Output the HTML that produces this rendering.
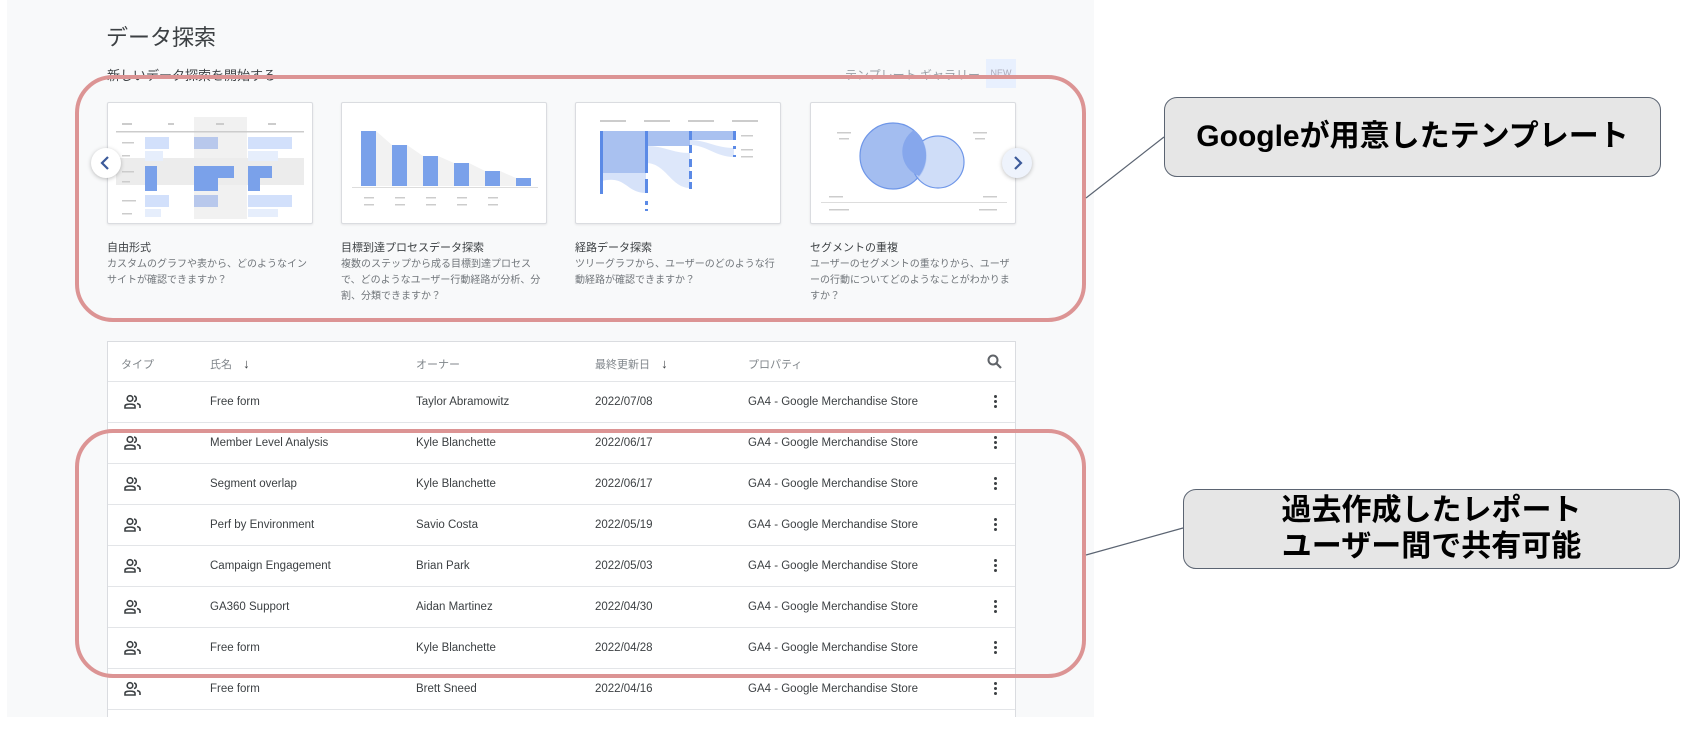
<!DOCTYPE html>
<html><head><meta charset="utf-8">
<style>
*{margin:0;padding:0;box-sizing:border-box}
body{width:1682px;height:734px;background:#fff;position:relative;overflow:hidden;font-family:"Liberation Sans","Noto Sans CJK JP",sans-serif;color:#3c4043}
.a{position:absolute}
#panel{left:7px;top:0;width:1087px;height:717px;background:#f8f9fa}
.card{position:absolute;top:102px;width:206px;height:122px;background:#fff;border:1px solid #dadce0;border-radius:2px;box-shadow:0 1px 2px rgba(0,0,0,.08)}
.ct{position:absolute;top:239px;font-size:11px;color:#3c4043;width:206px}
.cd{position:absolute;top:257px;font-size:10px;color:#70757a;line-height:16px;width:206px}
.tbl{left:107px;top:341px;width:909px;height:376px;background:#fff;border:1px solid #dadce0;border-bottom:none}
.row{position:absolute;left:0;width:907px;height:41px;border-bottom:1px solid #e3e5e8;font-size:11.5px;color:#3c4043}
.row span{position:absolute;top:14px;white-space:nowrap}
.hdr span{color:#80868b;font-size:11px}
.dots{position:absolute;left:886px;top:13px;width:3px}
.dots i{display:block;width:3px;height:3px;background:#3c4043;border-radius:50%;margin-bottom:2px}
.red{position:absolute;border:4px solid #dc9494;border-radius:38px}
.call{position:absolute;background:#e6e6e6;border:1.5px solid #5b6472;border-radius:13px;font-weight:bold;color:#000;text-align:center;font-size:30px;line-height:36px;display:flex;align-items:center;justify-content:center}
.arr{position:absolute;width:30px;height:30px;border-radius:50%;background:#fff;box-shadow:0 1px 4px rgba(0,0,0,.25)}
</style></head><body>
<div id="panel" class="a"></div>
<div class="a" style="left:106px;top:20px;font-size:22px;color:#3c4043">データ探索</div>
<div class="a" style="left:107px;top:65px;font-size:13px;color:#3c4043">新しいデータ探索を開始する</div>
<div class="a" style="left:845px;top:66px;font-size:12px;color:#9aa0a6">テンプレート ギャラリー</div>
<div class="a" style="left:986px;top:59px;width:30px;height:29px;background:#e8f0fe;font-size:9px;color:#aab;text-align:center;line-height:29px">NEW</div>

<div class="card" style="left:107px"><svg width="206" height="122">
<rect x="86" y="14" width="53" height="102" fill="#f1f1f1"/><rect x="8" y="55" width="188" height="27" fill="#ececec"/>
<g fill="#ccc"><rect x="14" y="20" width="10" height="2"/><rect x="60" y="20" width="6" height="2"/><rect x="108" y="20" width="8" height="2"/><rect x="160" y="20" width="8" height="2"/></g>
<rect x="8" y="28" width="188" height="1.5" fill="#ccc"/>
<g fill="#d2e0fb"><rect x="37" y="34" width="24" height="12"/><rect x="140" y="34" width="44" height="12"/><rect x="37" y="92" width="24" height="12"/><rect x="140" y="92" width="44" height="12"/></g>
<g fill="#e6eefc"><rect x="37" y="48" width="18" height="10"/><rect x="140" y="48" width="30" height="10"/><rect x="37" y="106" width="16" height="8"/><rect x="140" y="106" width="30" height="8"/></g>
<g fill="#b8c8ec"><rect x="86" y="34" width="24" height="12"/><rect x="86" y="92" width="24" height="12"/></g>
<g fill="#7aa1ea"><rect x="37" y="63" width="12" height="25"/><rect x="86" y="63" width="40" height="12"/><rect x="86" y="63" width="24" height="25"/><rect x="140" y="63" width="24" height="12"/><rect x="140" y="63" width="12" height="25"/></g>
<g fill="#ccc"><rect x="14" y="39" width="12" height="1.5"/><rect x="14" y="52" width="8" height="1.5"/><rect x="14" y="68" width="12" height="1.5"/><rect x="14" y="78" width="8" height="1.5"/><rect x="14" y="97" width="14" height="1.5"/><rect x="14" y="110" width="10" height="1.5"/></g>
</svg></div>
<div class="card" style="left:341px"><svg width="206" height="122">
<polygon points="34,28 50,42 65,42 81,53 96,53 112,60 127,60 143,68 158,68 174,75 189,75 189,83 19,83" fill="#f2f2f2"/>
<g fill="#7aa1ea"><rect x="19" y="28" width="15" height="55"/><rect x="50" y="42" width="15" height="41"/><rect x="81" y="53" width="15" height="30"/><rect x="112" y="60" width="15" height="23"/><rect x="143" y="68" width="15" height="15"/><rect x="174" y="75" width="15" height="8"/></g>
<rect x="10" y="84" width="186" height="1" fill="#ddd"/>
<g fill="#ccc"><rect x="22" y="94" width="10" height="1.5"/><rect x="53" y="94" width="10" height="1.5"/><rect x="84" y="94" width="10" height="1.5"/><rect x="115" y="94" width="10" height="1.5"/><rect x="146" y="94" width="10" height="1.5"/><rect x="22" y="101" width="10" height="1.5"/><rect x="53" y="101" width="10" height="1.5"/><rect x="84" y="101" width="10" height="1.5"/><rect x="115" y="101" width="10" height="1.5"/><rect x="146" y="101" width="10" height="1.5"/></g>
</svg></div>
<div class="card" style="left:575px"><svg width="206" height="122">
<g fill="#ccc"><rect x="24" y="17" width="26" height="2"/><rect x="68" y="17" width="26" height="2"/><rect x="112" y="17" width="26" height="2"/><rect x="156" y="17" width="26" height="2"/></g>
<rect x="26" y="28" width="44" height="42" fill="#a9c1f0"/>
<path d="M26 70 L70 70 L70 90 C50 90 50 72 26 78Z" fill="#d6e2f9"/>
<rect x="70" y="28" width="44" height="15" fill="#a9c1f0"/>
<path d="M70 43 C90 43 95 50 114 50 L114 85 C95 85 90 60 70 60Z" fill="#dde7fa"/>
<rect x="114" y="28" width="44" height="9" fill="#a9c1f0"/>
<path d="M114 37 C130 37 140 45 158 45 L158 54 C140 54 130 42 114 42Z" fill="#dde7fa"/>
<g fill="#5b8ae6"><rect x="24" y="28" width="3" height="63"/><rect x="69" y="28" width="3" height="42"/><rect x="69" y="76" width="3" height="14"/><rect x="69" y="98" width="3" height="4"/><rect x="69" y="106" width="3" height="2"/><rect x="113" y="28" width="3" height="9"/><rect x="113" y="42" width="3" height="8"/><rect x="113" y="56" width="3" height="8"/><rect x="113" y="68" width="3" height="8"/><rect x="113" y="79" width="3" height="7"/><rect x="157" y="28" width="3" height="9"/><rect x="157" y="43" width="3" height="3"/><rect x="157" y="52" width="3" height="2"/></g>
<g fill="#ccc"><rect x="165" y="32" width="12" height="1.5"/><rect x="165" y="46" width="12" height="1.5"/><rect x="165" y="53" width="12" height="1.5"/></g>
</svg></div>
<div class="card" style="left:810px"><svg width="206" height="122">
<circle cx="82" cy="53" r="33" fill="#a3bdf0" stroke="#6e96e8" stroke-width="1.2"/>
<circle cx="127" cy="59" r="26" fill="#c3d4f6" fill-opacity=".8" stroke="#6e96e8" stroke-width="1.2"/>
<path d="M103 27 A33 33 0 0 1 108 73 A26 26 0 0 1 103 27Z" fill="#86a7ec"/>
<g fill="#ccc"><rect x="26" y="29" width="14" height="1.5"/><rect x="28" y="35" width="10" height="1.5"/><rect x="162" y="29" width="14" height="1.5"/><rect x="164" y="35" width="10" height="1.5"/><rect x="18" y="93" width="14" height="1.5"/><rect x="172" y="93" width="14" height="1.5"/><rect x="18" y="106" width="20" height="1.5"/><rect x="168" y="106" width="18" height="1.5"/></g>
<rect x="10" y="99" width="186" height="1" fill="#ddd"/>
</svg></div>

<div class="arr" style="left:91px;top:148px"><svg width="30" height="30"><path d="M17 9 L11 15 L17 21" fill="none" stroke="#3c5a9a" stroke-width="2.2"/></svg></div>
<div class="arr" style="left:1002px;top:148px;background:#eef3fc"><svg width="30" height="30"><path d="M13 9 L19 15 L13 21" fill="none" stroke="#3c5a9a" stroke-width="2.2"/></svg></div>

<div class="ct" style="left:107px">自由形式</div>
<div class="cd" style="left:107px">カスタムのグラフや表から、どのようなイン<br>サイトが確認できますか？</div>
<div class="ct" style="left:341px">目標到達プロセスデータ探索</div>
<div class="cd" style="left:341px">複数のステップから成る目標到達プロセス<br>で、どのようなユーザー行動経路が分析、分<br>割、分類できますか？</div>
<div class="ct" style="left:575px">経路データ探索</div>
<div class="cd" style="left:575px">ツリーグラフから、ユーザーのどのような行<br>動経路が確認できますか？</div>
<div class="ct" style="left:810px">セグメントの重複</div>
<div class="cd" style="left:810px">ユーザーのセグメントの重なりから、ユーザ<br>ーの行動についてどのようなことがわかりま<br>すか？</div>

<div class="a tbl">
<div class="row hdr" style="top:0;height:40px"><span style="left:13px">タイプ</span><span style="left:102px">氏名 <b style="color:#3c4043;margin-left:8px;font-size:13px">↓</b></span><span style="left:308px">オーナー</span><span style="left:487px">最終更新日 <b style="color:#3c4043;margin-left:8px;font-size:13px">↓</b></span><span style="left:640px">プロパティ</span>
<svg class="a" style="left:878px;top:11px" width="18" height="18"><circle cx="7" cy="7" r="4.5" fill="none" stroke="#5f6368" stroke-width="2"/><path d="M10.5 10.5 L15 15" stroke="#5f6368" stroke-width="2.2"/></svg></div>
</div>
<script>
var d=[["Free form","Taylor Abramowitz","2022/07/08"],["Member Level Analysis","Kyle Blanchette","2022/06/17"],["Segment overlap","Kyle Blanchette","2022/06/17"],["Perf by Environment","Savio Costa","2022/05/19"],["Campaign Engagement","Brian Park","2022/05/03"],["GA360 Support","Aidan Martinez","2022/04/30"],["Free form","Kyle Blanchette","2022/04/28"],["Free form","Brett Sneed","2022/04/16"]];
var t=document.querySelector('.tbl'),h='';
d.forEach(function(r,i){h+='<div class="row" style="top:'+(40+i*41)+'px"><svg class="a" style="left:16px;top:12px" width="18" height="16"><circle cx="6" cy="4.5" r="2.8" fill="none" stroke="#3c4043" stroke-width="1.6"/><path d="M1 14 V12 C1 9.5 11 9.5 11 12 V14Z" fill="none" stroke="#3c4043" stroke-width="1.6"/><path d="M10 2 A2.8 2.8 0 0 1 10 7.5 M13 9.5 C15 10 16 11 16 12 V14" fill="none" stroke="#3c4043" stroke-width="1.6"/></svg><span style="left:102px">'+r[0]+'</span><span style="left:308px">'+r[1]+'</span><span style="left:487px">'+r[2]+'</span><span style="left:640px">GA4 - Google Merchandise Store</span><div class="dots"><i></i><i></i><i></i></div></div>'});
t.insertAdjacentHTML('beforeend',h);
</script>

<div class="red" style="left:75px;top:75px;width:1011px;height:247px"></div>
<div class="red" style="left:75px;top:429px;width:1011px;height:249px"></div>

<svg class="a" style="left:0;top:0" width="1682" height="734"><line x1="1086" y1="198" x2="1164" y2="137" stroke="#5b6472" stroke-width="1.2"/><line x1="1086" y1="555" x2="1183" y2="528" stroke="#5b6472" stroke-width="1.2"/></svg>
<div class="call" style="left:1164px;top:97px;width:497px;height:80px">Googleが用意したテンプレート</div>
<div class="call" style="left:1183px;top:489px;width:497px;height:80px">過去作成したレポート<br>ユーザー間で共有可能</div>
</body></html>
